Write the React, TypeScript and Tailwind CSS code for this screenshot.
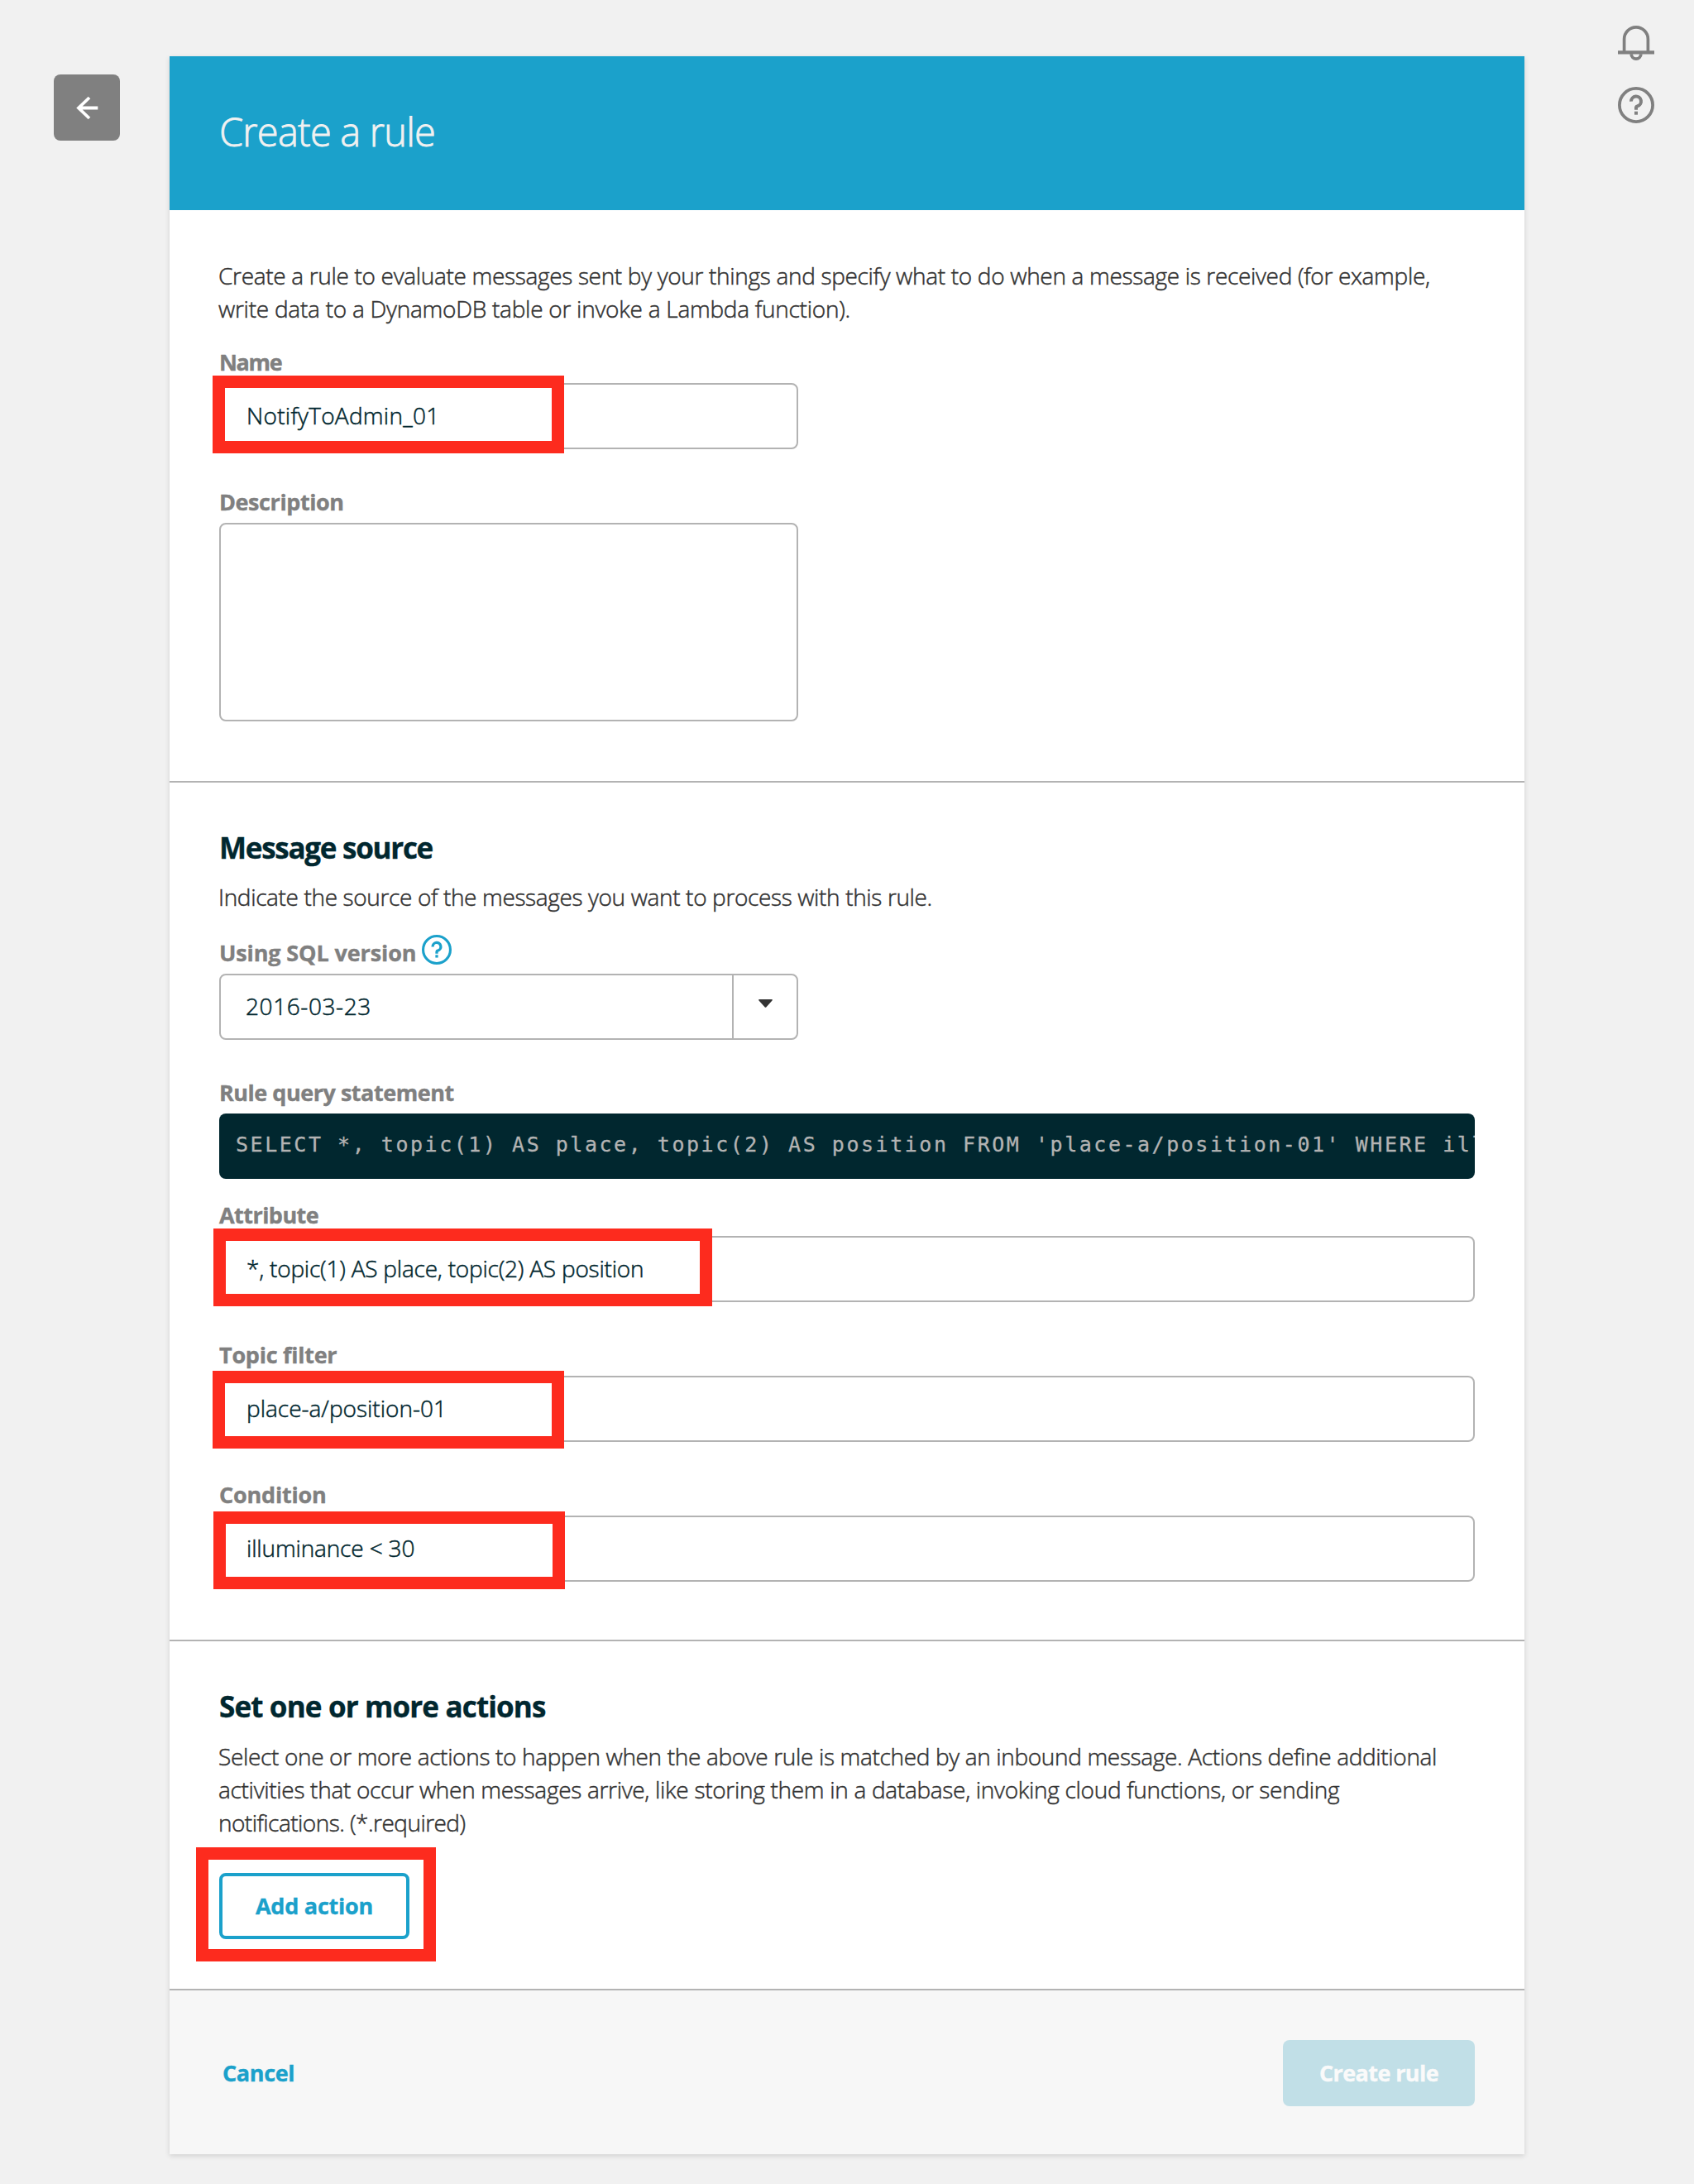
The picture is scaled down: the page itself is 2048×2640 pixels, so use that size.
import React from "react";
import type { ReactNode } from "react";

function HelpIcon({ className }: { className: string }) {
  return (
    <svg viewBox="0 0 44 44" fill="none" stroke="currentColor" className={className}>
      <circle cx="22" cy="22" r="20.1" strokeWidth="3.8" />
      <path d="M16 17.6a6 6 0 1 1 7.6 5.7q-1.6.5-1.6 1.7v2.7" strokeWidth="4" />
      <path d="M22 29.7v4" strokeWidth="4" />
    </svg>
  );
}

function BellIcon() {
  return (
    <svg viewBox="0 0 44 42" fill="none" stroke="currentColor" className="h-[42px] w-[44px]">
      <path d="M7.6 31V16.25a14.4 14.4 0 0 1 28.8 0V31" strokeWidth="3.7" />
      <path d="M0 32.3H44" strokeWidth="4.2" />
      <path d="M16.2 34.3a5.8 5.8 0 0 0 11.6 0" strokeWidth="3.8" />
    </svg>
  );
}

function Label({ children, className = "" }: { children: ReactNode; className?: string }) {
  return (
    <div
      className={`mb-[6px] h-10 whitespace-nowrap text-[27px] leading-[42px] font-bold text-[#808080] [-webkit-text-stroke:0.4px] ${className}`}
    >
      {children}
    </div>
  );
}

function Highlight({ className }: { className: string }) {
  return <div className={`pointer-events-none absolute border-[15px] border-[#fd2b1e] ${className}`} />;
}

function Field({
  value,
  textClass,
  markClass,
  className = "",
}: {
  value: string;
  textClass: string;
  markClass: string;
  className?: string;
}) {
  return (
    <div className={`relative h-20 ${className}`}>
      <div
        className={`flex h-20 items-center rounded-[8px] border-2 border-[#b3b3b3] bg-white pb-[2px] pl-[31px] text-[28px] font-light whitespace-nowrap text-[#01272f] [-webkit-text-stroke:0.5px] ${textClass}`}
      >
        {value}
      </div>
      <Highlight className={markClass} />
    </div>
  );
}

const body =
  "text-[28px] leading-10 font-light whitespace-nowrap text-[#333] [-webkit-text-stroke:0.5px] -ml-px";
const heading =
  "h-12 text-[35px] leading-[50px] font-bold whitespace-nowrap text-[#01272f] [-webkit-text-stroke:0.4px]";

export default function App() {
  return (
    <div className="flex h-[2640px] w-[2048px] items-start overflow-hidden bg-[#f1f1f1] font-['Open_Sans',sans-serif]">
      <aside className="flex w-[205px] shrink-0 justify-end pt-[90px] pr-[60px]">
        <button className="size-20 rounded-[8px] bg-[#808080] text-white">
          <svg viewBox="0 0 80 80" fill="none" stroke="currentColor" className="size-20">
            <path d="M43 28L30 40.5L43 53M30.5 40.5H53.3" strokeWidth="3.8" />
          </svg>
        </button>
      </aside>

      <main className="mt-[68px] w-[1638px] shrink-0 bg-white shadow-[0_2px_6px_rgba(0,0,0,0.14)]">
        <header className="flex h-[186px] items-center bg-[#1ba1cb] pb-[3px] pl-[60px]">
          <h1 className="text-[47px] font-light tracking-[-0.8px] text-[#f1f1f1] [-webkit-text-stroke:0.8px]">
            Create a rule
          </h1>
        </header>

        <section className="h-[690px] pt-[59px] pr-[60px] pl-[60px]">
          <p className={`mb-6 ${body}`}>
            <span className="tracking-[-0.322px]">
              Create a rule to evaluate messages sent by your things and specify what to do when a message is received (for
              example,
            </span>
            <br />
            <span className="tracking-[-0.255px]">write data to a DynamoDB table or invoke a Lambda function).</span>
          </p>
          <Label className="tracking-[-1.37px]">Name</Label>
          <Field
            value="NotifyToAdmin_01"
            className="mb-[43px] w-[700px]"
            textClass="tracking-[0.27px]"
            markClass="top-[-9px] left-[-8px] h-[94px] w-[425px]"
          />
          <Label className="tracking-[-0.42px]">Description</Label>
          <div className="h-60 w-[700px] rounded-[8px] border-2 border-[#b3b3b3] bg-white" />
        </section>

        <section className="h-[1038px] border-t-2 border-[#b3b3b3] pt-[54px] pr-[60px] pl-[60px]">
          <h2 className={`mb-4 tracking-[-1.27px] ${heading}`}>Message source</h2>
          <p className={`mb-[27px] tracking-[-0.361px] ${body}`}>
            Indicate the source of the messages you want to process with this rule.
          </p>
          <Label className="flex items-start gap-[7px] tracking-[-0.12px]">
            Using SQL version
            <HelpIcon className="-mt-px size-9 text-[#1ba1cb]" />
          </Label>
          <div className="mb-[43px] flex h-20 w-[700px] rounded-[8px] border-2 border-[#b3b3b3] bg-white">
            <div className="flex flex-1 items-center border-r-2 border-[#b3b3b3] pb-[2px] pl-[30px] text-[28px] font-light tracking-[0.6px] text-[#01272f] [-webkit-text-stroke:0.5px]">
              2016-03-23
            </div>
            <div className="flex w-[76px] justify-center pt-[29px]">
              <svg viewBox="0 0 17 10" className="h-[10px] w-[17px] fill-[#333]">
                <path d="M1 0H16Q17.5.5 16.5 1.5L9.5 9.2Q8.5 10.2 7.5 9.2L.5 1.5Q-.5.5 1 0Z" />
              </svg>
            </div>
          </div>
          <Label className="tracking-[-0.48px]">Rule query statement</Label>
          <div className="mb-[23px] h-[79px] overflow-hidden rounded-[8px] bg-[#01272f] pl-5 font-['DejaVu_Sans_Mono',monospace] text-[25px] leading-[75px] tracking-[2.53px] whitespace-nowrap text-[#b3b3b3] [-webkit-text-stroke:0.3px]">
            SELECT *, topic(1) AS place, topic(2) AS position FROM 'place-a/position-01' WHERE illuminance &lt; 30
          </div>
          <Label className="tracking-[-0.54px]">Attribute</Label>
          <Field
            value="*, topic(1) AS place, topic(2) AS position"
            className="mb-[43px]"
            textClass="tracking-[-0.218px]"
            markClass="top-[-9px] left-[-7px] h-[94px] w-[603px]"
          />
          <Label className="tracking-[-0.26px]">Topic filter</Label>
          <Field
            value="place-a/position-01"
            className="mb-[43px]"
            textClass="tracking-[0px]"
            markClass="top-[-6px] left-[-8px] h-[94px] w-[425px]"
          />
          <Label className="tracking-[-0.2px]">Condition</Label>
          <Field
            value="illuminance < 30"
            textClass="tracking-[-0.15px]"
            markClass="top-[-5px] left-[-7px] h-[94px] w-[425px]"
          />
        </section>

        <section className="h-[422px] border-t-2 border-[#b3b3b3] pt-[54px] pr-[60px] pl-[60px]">
          <h2 className={`mb-[17px] tracking-[-0.85px] ${heading}`}>Set one or more actions</h2>
          <p className={`mb-[41px] ${body}`}>
            <span className="tracking-[-0.344px]">
              Select one or more actions to happen when the above rule is matched by an inbound message. Actions define
              additional
            </span>
            <br />
            <span className="tracking-[-0.3px]">
              activities that occur when messages arrive, like storing them in a database, invoking cloud functions, or
              sending
            </span>
            <br />
            <span className="tracking-[-0.543px]">notifications. (*.required)</span>
          </p>
          <div className="relative h-20 w-[230px]">
            <button className="flex h-20 w-[230px] items-center justify-center rounded-[8px] border-4 border-[#1ba1cb] bg-white text-[27px] font-bold tracking-[-0.22px] whitespace-nowrap text-[#1ba1cb] [-webkit-text-stroke:0.4px]">
              Add action
            </button>
            <Highlight className="top-[-31px] left-[-28px] h-[138px] w-[290px]" />
          </div>
        </section>

        <footer className="flex h-[200px] items-start justify-between border-t-2 border-[#b3b3b3] bg-[#f7f7f7] pt-[60px] pr-[60px] pl-16">
          <button className="h-20 text-[27px] font-bold tracking-[-0.37px] text-[#1ba1cb] [-webkit-text-stroke:0.4px]">
            Cancel
          </button>
          <button className="h-20 w-[232px] rounded-[8px] bg-[#c1dfe7] text-[27px] font-bold tracking-[-0.6px] text-[#fafafa] [-webkit-text-stroke:0.4px]">
            Create rule
          </button>
        </footer>
      </main>

      <aside className="flex flex-1 flex-col items-end gap-8 pt-[31px] pr-12 text-[#808080]">
        <BellIcon />
        <HelpIcon className="size-11" />
      </aside>
    </div>
  );
}
